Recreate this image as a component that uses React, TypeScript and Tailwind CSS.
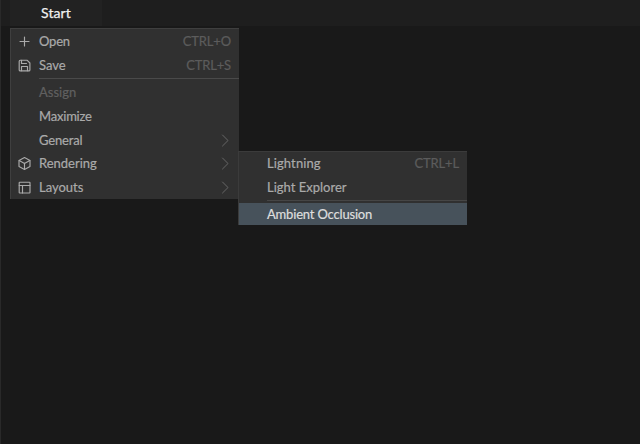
import type { ReactNode } from 'react';

const strokeProps = {
  fill: 'none',
  stroke: 'currentColor',
  strokeWidth: 1.15,
  strokeLinecap: 'round',
  strokeLinejoin: 'round',
} as const;

function Icon({ children }: { children: ReactNode }) {
  return (
    <svg className="h-[15px] w-[15px]" viewBox="0 0 15 15" {...strokeProps}>
      {children}
    </svg>
  );
}

const PlusIcon = (
  <Icon>
    <path d="M7.5 3v9M3 7.5h9" />
  </Icon>
);

const SaveIcon = (
  <Icon>
    <path d="M2.2 3.2Q2.2 2.2 3.2 2.2H10L12.9 5v6.9q0 1-1 1H3.2Q2.2 12.9 2.2 11.9Z" />
    <path d="M4.5 2.4V5.5H9.5M4.5 12.7V8.5H10.5v4.2" />
  </Icon>
);

const BoxIcon = (
  <Icon>
    <path d="M7.5 1.5L13 4.4v6.2L7.5 13.5 2 10.6V4.4Z" />
    <path d="M2.2 4.6L7.5 7.4l5.3-2.8M7.5 7.4v5.9" />
  </Icon>
);

const LayoutIcon = (
  <Icon>
    <rect x="2.2" y="2.2" width="10.8" height="10.8" rx="0.5" />
    <path d="M2.2 5.5h10.8M5.5 5.5V13" />
  </Icon>
);

type RowProps = {
  label: string;
  tracking?: string;
  icon?: ReactNode;
  shortcut?: string;
  arrow?: boolean;
  disabled?: boolean;
  height?: string;
  children?: ReactNode;
};

function Row({ label, tracking = '', icon, shortcut, arrow, disabled, height = 'h-6', children }: RowProps) {
  return (
    <div className={`relative flex items-center pr-[8px] ${height} ${disabled ? 'text-[#606060]' : 'text-[#aaaaaa]'}`}>
      <span className="flex w-7 shrink-0 pl-[6px]">{icon}</span>
      <span className={`flex-1 whitespace-nowrap [-webkit-text-stroke:0.2px_currentColor] ${tracking}`}>{label}</span>
      {shortcut && <span className="tracking-[-0.15px] text-[#5c5c5c] [-webkit-text-stroke:0.2px_currentColor]">{shortcut}</span>}
      {arrow && (
        <svg className="mr-[2px] h-[13px] w-[8px] text-[#666666]" viewBox="0 0 8 13" {...strokeProps} strokeWidth={1}>
          <path d="M1.5 1L7 6.5 1.5 12" />
        </svg>
      )}
      {children}
    </div>
  );
}

function Submenu() {
  return (
    <div className="absolute top-[-1px] left-[227px] w-[229px] border-t border-l border-[#3b3b3b] bg-[#303030]">
      <Row label="Lightning" shortcut="CTRL+L" tracking="tracking-[0.1px]" height="h-[23px]" />
      <Row label="Light Explorer" />
      <div className="mt-px mb-[2px] ml-7 h-px bg-[#464646]" />
      <div className="flex h-[22px] items-center bg-[#47525b] pt-px pl-7 text-[#dedede]">
        <span className="tracking-[-0.18px] whitespace-nowrap [-webkit-text-stroke:0.2px_currentColor]">Ambient Occlusion</span>
      </div>
    </div>
  );
}

export default function App() {
  return (
    <div className="h-[444px] w-[640px] overflow-hidden border-l border-[#292929] bg-[#191919] font-[Lato,sans-serif] text-[13px] leading-none">
      <div className="flex h-[26px] bg-[#1e1e1e] pl-[9px]">
        <div className="flex h-full w-[92px] items-center justify-center bg-[#222222] text-[14px] tracking-[0.1px] text-[#f0f0f0] [-webkit-text-stroke:0.25px_currentColor]">
          Start
        </div>
      </div>
      <div className="mt-[2px] ml-[9px] w-[229px] border-t border-l border-[#3f3f3f] bg-[#303030]">
        <Row label="Open" icon={PlusIcon} shortcut="CTRL+O" tracking="tracking-[-0.2px]" />
        <Row label="Save" icon={SaveIcon} shortcut="CTRL+S" />
        <div className="my-px ml-7 h-px bg-[#4a4a4a]" />
        <Row label="Assign" disabled />
        <Row label="Maximize" tracking="tracking-[-0.2px]" />
        <Row label="General" arrow tracking="tracking-[-0.15px]" />
        <Row label="Rendering" icon={BoxIcon} arrow height="h-[23px]">
          <Submenu />
        </Row>
        <Row label="Layouts" icon={LayoutIcon} arrow />
      </div>
    </div>
  );
}
